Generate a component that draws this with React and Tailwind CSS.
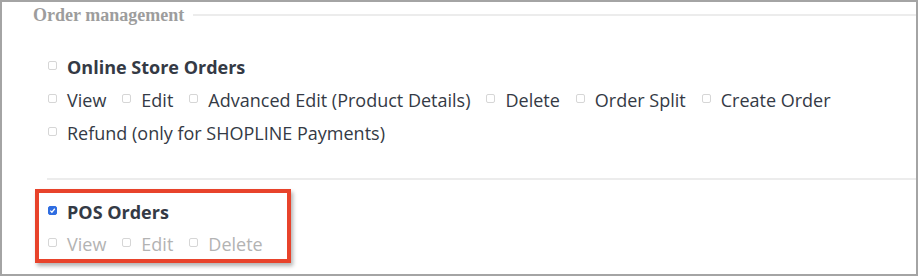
import React from 'react';

const Box = ({ checked }) => (
  <span
    className={
      'mt-[6px] flex h-[9px] w-[9px] shrink-0 items-center justify-center rounded-[2px] border ' +
      (checked ? 'border-[#2f6de1] bg-[#2f6de1]' : 'border-[#d6d6d6] bg-white')
    }
  >
    {checked && (
      <svg width="7" height="7" viewBox="0 0 8 8">
        <path d="M1.5 4.2 L3.3 6 L6.6 2" fill="none" stroke="white" strokeWidth="1.4" />
      </svg>
    )}
  </span>
);

const Option = ({ label, disabled }) => (
  <label className="flex items-start gap-[10px]">
    <Box />
    <span className={disabled ? 'text-[#b3b3b3]' : 'text-[#343a45]'}>{label}</span>
  </label>
);

const App = () => {
  return (
    <div
      className="h-[276px] w-[918px] overflow-hidden border-2 border-[#a4a4a4] bg-white text-[18px] leading-[24px]"
      style={{ fontFamily: '"Open Sans", sans-serif' }}
    >
      <div className="flex items-center pt-[3px]">
        <span
          className="pl-[31px] text-[18px] font-bold leading-[20px] text-[#9d9d9d]"
          style={{ fontFamily: '"Liberation Serif", serif' }}
        >
          Order management
        </span>
        <div className="ml-[9px] h-[2px] flex-1 bg-[#ececec]" />
      </div>

      <div className="pl-[46px] pt-[30px]">
        <div className="flex items-start gap-[10px]">
          <Box />
          <span className="font-bold text-[#343a45]">Online Store Orders</span>
        </div>
        <div className="mt-[9px] flex gap-[16px]">
          <Option label="View" />
          <Option label="Edit" />
          <Option label="Advanced Edit (Product Details)" />
          <Option label="Delete" />
          <Option label="Order Split" />
          <Option label="Create Order" />
        </div>
        <div className="mt-[9px] flex">
          <Option label="Refund (only for SHOPLINE Payments)" />
        </div>
      </div>

      <div className="ml-[45px] mt-[33px] h-[2px] bg-[#ececec]" />

      <div className="ml-[33px] mt-[9px] w-[256px] border-[4px] border-[#e8432b] pb-[3px] pl-[9px] pt-[7px] shadow-[2px_3px_4px_rgba(0,0,0,0.3)]">
        <div className="flex items-start gap-[10px]">
          <Box checked />
          <span className="font-bold text-[#343a45]">POS Orders</span>
        </div>
        <div className="mt-[8px] flex gap-[16px]">
          <Option label="View" disabled />
          <Option label="Edit" disabled />
          <Option label="Delete" disabled />
        </div>
      </div>
    </div>
  );
};

export default App;
